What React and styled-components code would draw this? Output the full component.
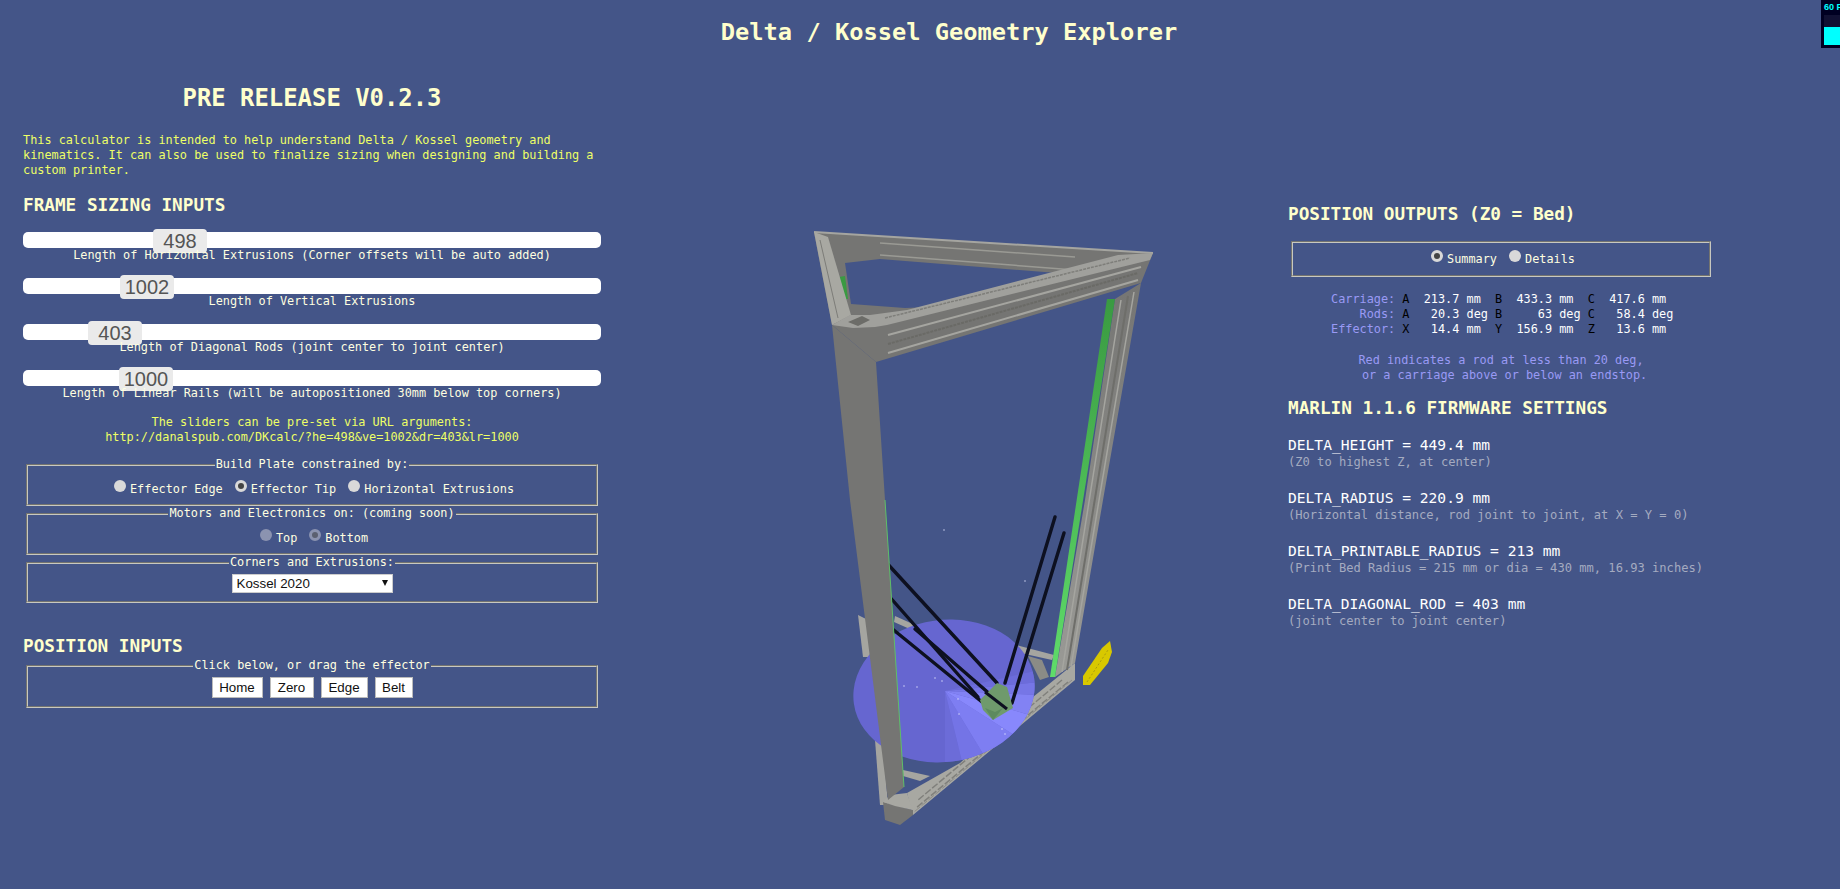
import React from "react";
import styled, { createGlobalStyle } from "styled-components";

const mono = `"DejaVu Sans Mono", "Liberation Mono", monospace`;
const sans = `"Liberation Sans", Arial, sans-serif`;

const GlobalStyle = createGlobalStyle`
  html, body {
    margin: 0;
    padding: 0;
    background: #445588;
    overflow: hidden;
  }
  body {
    font-family: ${mono};
    font-size: 11.85px;
    line-height: 15px;
    color: #ffffe0;
  }
`;

const Page = styled.div`
  position: relative;
  width: 1840px;
  height: 889px;
  overflow: hidden;
`;

const Title = styled.h1`
  margin: 0;
  padding-left: 58px;
  height: 64px;
  line-height: 64px;
  text-align: center;
  font-size: 23.7px;
  font-weight: bold;
  color: #ffffcc;
`;

const Columns = styled.div`
  display: grid;
  grid-template-columns: 625px 645px 570px;
`;

const LeftColumn = styled.section`
  padding-left: 23px;
  width: 578px;
`;

const RightColumn = styled.section`
  padding: 139px 0 0 18px;
`;

const Release = styled.h2`
  margin: 19px 0 0;
  line-height: 30px;
  text-align: center;
  font-size: 23.9px;
  font-weight: bold;
  color: #ffffcc;
`;

const Intro = styled.p`
  margin: 20px 0 0;
  color: #eeff66;
  white-space: pre-line;
`;

const Heading = styled.h3`
  margin: ${(p) => p.$top || 0}px 0 0;
  line-height: 22px;
  font-size: 17.7px;
  font-weight: bold;
  color: #ffffcc;
`;

const SliderList = styled.div`
  display: flex;
  flex-direction: column;
  gap: 15px;
  margin-top: 16px;
`;

const Track = styled.div`
  position: relative;
  height: 16px;
  background: #fff;
  border-radius: 5px;
`;

const Thumb = styled.div`
  position: absolute;
  top: -3px;
  width: 54px;
  height: 24px;
  border-radius: 4px;
  background: #eaeaea;
  color: #555;
  font: 20px/24px ${sans};
  text-align: center;
`;

const SliderLabel = styled.div`
  position: relative;
  text-align: center;
  white-space: pre;
`;

const Hint = styled.div`
  margin-top: 14px;
  color: #eeff66;
  text-align: center;
`;

const Group = styled.fieldset`
  box-sizing: border-box;
  margin: ${(p) => p.$top || 0}px 3px 0;
  padding: 0;
  width: ${(p) => (p.$width ? `${p.$width}px` : "auto")};
  height: ${(p) => p.$height}px;
  min-width: 0;
  border: 2px groove #c8c8c0;
  text-align: center;
`;

const GroupTitle = styled.legend`
  padding: 0 1px;
  line-height: 15px;
  color: #ffffe0;
`;

const RadioRow = styled.div`
  display: flex;
  justify-content: center;
  align-items: flex-start;
  gap: 12px;
  padding: ${(p) => p.$top ?? 10}px 0 0 4px;
`;

const RadioLabel = styled.label`
  display: flex;
  align-items: flex-start;
  gap: 4px;
  color: #ffffe0;
`;

const Radio = styled.input.attrs({ type: "radio" })`
  appearance: none;
  box-sizing: border-box;
  width: 12px;
  height: 12px;
  margin: -2px 0 0;
  border-radius: 50%;
  background: ${(p) => (p.disabled ? "#8b93b0" : "#d9d9d9")};
  &:checked {
    border: 3px solid ${(p) => (p.disabled ? "#8b93b0" : "#d9d9d9")};
    background: ${(p) => (p.disabled ? "#5b6070" : "#444")};
  }
`;

const SelectWrap = styled.div`
  position: relative;
  width: 161px;
  height: 19px;
  margin: 4px auto 0;
`;

const Select = styled.select`
  appearance: none;
  display: block;
  box-sizing: border-box;
  width: 100%;
  height: 100%;
  padding: 0 0 0 4px;
  border: 1px solid #ccc;
  border-radius: 0;
  background: #fff;
  color: #111;
  font: 13.33px ${sans};
`;

const SelectArrow = styled.span`
  position: absolute;
  top: 6px;
  right: 5px;
  border-style: solid;
  border-width: 6px 3px 0;
  border-color: #111 transparent transparent;
  pointer-events: none;
`;

const ButtonRow = styled.div`
  display: flex;
  justify-content: center;
  gap: 7px;
  padding-top: 4px;
`;

const Button = styled.button`
  box-sizing: border-box;
  width: ${(p) => p.$width}px;
  height: 21px;
  padding: 0;
  border: 1px solid #bbb;
  border-radius: 0;
  background: #fff;
  color: #111;
  font: 13.33px ${sans};
`;

const Readout = styled.div`
  margin: 15px 0 0 43px;
  white-space: pre;
  color: #fff;
`;

const Dim = styled.span`
  color: #9a9af5;
`;

const Axis = styled.span`
  color: #000;
`;

const Note = styled.div`
  margin: 16px 0 0 3px;
  width: 420px;
  text-align: center;
  white-space: pre;
  color: #9a9af5;
`;

const Settings = styled.div`
  display: flex;
  flex-direction: column;
  gap: 18px;
  margin-top: 16px;
`;

const SettingName = styled.div`
  font-size: 14.6px;
  line-height: 20px;
  color: #fff;
`;

const SettingHelp = styled.div`
  font-size: 12.1px;
  line-height: 15px;
  color: #a4abc0;
`;

const Stats = styled.div`
  position: absolute;
  top: 0;
  left: 1821px;
  width: 80px;
  height: 48px;
  background: #000022;
`;

const StatsText = styled.div`
  padding: 1px 0 0 3px;
  font: bold 9px/13px ${sans};
  color: #00ffff;
`;

const StatsGraph = styled.div`
  margin: 1px 0 0 3px;
  width: 74px;
  height: 30px;
  background: linear-gradient(#113 0, #113 12px, #00ffff 12px);
`;

const Canvas = styled.svg`
  display: block;
  margin-top: 136px;
`;

const sliders = [
  { value: 498, left: 130, label: "Length of Horizontal Extrusions (Corner offsets will be auto added)" },
  { value: 1002, left: 97, label: "Length of Vertical Extrusions" },
  { value: 403, left: 65, label: "Length of Diagonal Rods (joint center to joint center)" },
  { value: 1000, left: 96, label: "Length of Linear Rails (will be autopositioned 30mm below top corners)" },
];

const settings = [
  { name: "DELTA_HEIGHT = 449.4 mm", help: "(Z0 to highest Z, at center)" },
  { name: "DELTA_RADIUS = 220.9 mm", help: "(Horizontal distance, rod joint to joint, at X = Y = 0)" },
  { name: "DELTA_PRINTABLE_RADIUS = 213 mm", help: "(Print Bed Radius = 215 mm or dia = 430 mm, 16.93 inches)" },
  { name: "DELTA_DIAGONAL_ROD = 403 mm", help: "(joint center to joint center)" },
];

const rods = [
  [884, 560, 997, 683],
  [888, 595, 978, 697],
  [915, 629, 1007, 709],
  [890, 627, 982, 702],
  [1055, 517, 1005, 683],
  [1064, 533, 1012, 703],
];

const bedSpecks = [
  [904, 686], [917, 687], [935, 678], [942, 681], [958, 699],
  [959, 714], [1002, 729], [1005, 734], [1025, 581], [944, 530],
];

// fan of lighter shades on the bed, clockwise from the bottom
const bedFan = [
  ["945,770 964,770", "#6c6cd8"],
  ["964,770 988,762", "#7474e6"],
  ["988,762 1014,735", "#7e7ef2"],
  ["1014,735 1030,715", "#8888fc"],
  ["1030,715 1040,695", "#8282f4"],
  ["1040,695 1040,682", "#7676e6"],
  ["1040,682 1040,670", "#6c6cda"],
];

// the printer scene, drawn in page coordinates
function Printer() {
  return (
    <Canvas width="645" height="640" viewBox="625 200 645 640">
      <defs>
        <linearGradient id="rail" x1="0" y1="0" x2="0" y2="1">
          <stop offset="0" stopColor="#3a9a42" />
          <stop offset="1" stopColor="#5fdc6a" />
        </linearGradient>
        <linearGradient id="rightPost" x1="0" y1="0" x2="0" y2="1">
          <stop offset="0" stopColor="#757573" />
          <stop offset="1" stopColor="#9a9a96" />
        </linearGradient>
        <clipPath id="bedClip">
          <ellipse cx="944" cy="691" rx="91" ry="71" transform="rotate(-8 944 691)" />
        </clipPath>
      </defs>

      {/* rear bottom frame */}
      <polygon points="858,615 868,620 873,657 863,657" fill="#a5a5a0" />
      <polygon points="895,616 915,625 912,630 894,622" fill="#a5a5a0" />
      <polygon points="1016,645 1054,655 1052,660 1016,652" fill="#a5a5a0" />
      <polygon points="1028,656 1042,660 1049,677 1040,680" fill="#8b8b86" />
      <polygon points="875,740 883,745 888,805 880,805" fill="#a5a5a0" />
      <polygon points="903,770 930,776 920,781 903,776" fill="#a5a5a0" />

      {/* front bottom beam, it passes under the bed */}
      <polygon points="1075,663 1075,680 913,815 907,793 960,763 1033,697" fill="#a8a8a2" />
      <line x1="1062" y1="680" x2="918" y2="800" stroke="#80807c" strokeWidth="1.5" strokeDasharray="7 2" />
      <line x1="1068" y1="682" x2="916" y2="808" stroke="#80807c" strokeWidth="1.5" strokeDasharray="7 2" />
      <line x1="1072" y1="680" x2="914" y2="812" stroke="#8c8c88" strokeWidth="1" strokeDasharray="7 2" />

      {/* bed */}
      <ellipse cx="944" cy="691" rx="91" ry="71" transform="rotate(-8 944 691)" fill="#6666d0" />
      <g clipPath="url(#bedClip)">
        {bedFan.map(([edge, fill]) => (
          <polygon key={edge} points={`945,691 ${edge}`} fill={fill} />
        ))}
      </g>
      {bedSpecks.map((s, i) => (
        <circle key={i} cx={s[0]} cy={s[1]} r="0.7" fill="#dfe4ff" />
      ))}

      {/* bottom corner of the frame */}
      <polygon points="883,802 913,810 913,815 900,825 885,820" fill="#757573" />
      <polygon points="883,802 895,806 913,810 907,793 890,795" fill="#a8a8a2" />

      {/* top frame with its opening */}
      <path
        d="M814,232 L1153,253 L1141,283 L876,362 L832,325 Z M845,263 L880,259 L1057,273 L930,307 L905,308 L851,304 Z"
        fill="#757573"
        fillRule="evenodd"
      />
      <polygon points="839,277 845,276 848,299 843,299" fill="#3a9a42" />
      <line x1="880" y1="243" x2="1075" y2="257" stroke="#9a9a94" strokeWidth="1.5" />
      <line x1="880" y1="255" x2="1075" y2="270" stroke="#9a9a94" strokeWidth="1.5" />
      <line x1="814" y1="232" x2="1153" y2="253" stroke="#a5a5a0" strokeWidth="2" />
      <polygon points="814,232 828,237 851,315 832,325" fill="#a8a8a2" />
      <line x1="820" y1="240" x2="838" y2="318" stroke="#7c7c78" strokeWidth="1" />
      <polygon points="832,325 850,315 870,315 907,310 1118,255 1153,253 1150,260 887,325 875,327 853,328" fill="#a0a09c" />
      <line x1="885" y1="318" x2="1130" y2="258" stroke="#7e7e7a" strokeWidth="1.5" strokeDasharray="3 1" />
      <polygon points="848,322 862,316 870,320 858,326" fill="#6c6c68" />
      <line x1="888" y1="335" x2="1141" y2="267" stroke="#a5a5a0" strokeWidth="2" />
      <line x1="888" y1="353" x2="1138" y2="280" stroke="#a5a5a0" strokeWidth="2" />
      <line x1="888" y1="344" x2="1138" y2="273" stroke="#6a6a66" strokeWidth="2" strokeDasharray="3 1" />

      {/* right post with its rail */}
      <polygon points="1115,299 1141,283 1103,500 1075,663 1055,677 1085,500" fill="url(#rightPost)" />
      <line x1="1121" y1="300" x2="1062" y2="672" stroke="#a5a5a0" strokeWidth="1.5" />
      <line x1="1128" y1="296" x2="1067" y2="670" stroke="#6e6e6a" strokeWidth="2" />
      <line x1="1134" y1="292" x2="1071" y2="667" stroke="#a5a5a0" strokeWidth="1.5" />
      <polygon points="1107,299 1115,299 1055,677 1050,677" fill="url(#rail)" />

      {/* rods and effector */}
      <g stroke="#0d1020" strokeWidth="3.4" strokeLinecap="round">
        {rods.map((r, i) => (
          <line key={i} x1={r[0]} y1={r[1]} x2={r[2]} y2={r[3]} />
        ))}
      </g>
      <polygon points="980,700 997,683 1007,687 1013,708 993,720 983,710" fill="#6f9a6c" />
      <polygon points="985,708 995,712 1003,708 993,720" fill="#5d8a60" />
      <line x1="1007" y1="709" x2="985" y2="692" stroke="#0d1020" strokeWidth="3" />

      {/* left post */}
      <polygon points="832,325 876,362 885,500 904,787 888,800 850,500" fill="#757573" />
      <line x1="885" y1="500" x2="904" y2="787" stroke="#5fbf68" strokeWidth="1" />

      {/* yellow part beside the frame */}
      <polygon points="1083,685 1083,676 1102,648 1110,641 1112,652 1108,663 1090,685" fill="#d8c800" />
      <line x1="1087" y1="682" x2="1108" y2="650" stroke="#a89c10" strokeWidth="1" strokeDasharray="2 2" />
    </Canvas>
  );
}

export default function App() {
  return (
    <Page>
      <GlobalStyle />
      <Title>Delta / Kossel Geometry Explorer</Title>
      <Columns>
        <LeftColumn>
          <Release>PRE RELEASE V0.2.3</Release>
          <Intro>
            {"This calculator is intended to help understand Delta / Kossel geometry and\nkinematics. It can also be used to finalize sizing when designing and building a\ncustom printer."}
          </Intro>
          <Heading $top={16}>FRAME SIZING INPUTS</Heading>
          <SliderList>
            {sliders.map((s) => (
              <div key={s.label}>
                <Track>
                  <Thumb style={{ left: s.left }}>{s.value}</Thumb>
                </Track>
                <SliderLabel>{s.label}</SliderLabel>
              </div>
            ))}
          </SliderList>
          <Hint>
            The sliders can be pre-set via URL arguments:
            <br />
            http://danalspub.com/DKcalc/?he=498&amp;ve=1002&amp;dr=403&amp;lr=1000
          </Hint>
          <Group $top={12} $height={49}>
            <GroupTitle>Build Plate constrained by:</GroupTitle>
            <RadioRow>
              <RadioLabel><Radio name="plate" />Effector Edge</RadioLabel>
              <RadioLabel><Radio name="plate" defaultChecked />Effector Tip</RadioLabel>
              <RadioLabel><Radio name="plate" />Horizontal Extrusions</RadioLabel>
            </RadioRow>
          </Group>
          <Group $height={49}>
            <GroupTitle>Motors and Electronics on: (coming soon)</GroupTitle>
            <RadioRow>
              <RadioLabel><Radio name="motors" disabled />Top</RadioLabel>
              <RadioLabel><Radio name="motors" disabled defaultChecked />Bottom</RadioLabel>
            </RadioRow>
          </Group>
          <Group $height={48}>
            <GroupTitle>Corners and Extrusions:</GroupTitle>
            <SelectWrap>
              <Select defaultValue="k2020">
                <option value="k2020">Kossel 2020</option>
              </Select>
              <SelectArrow />
            </SelectWrap>
          </Group>
          <Heading $top={32}>POSITION INPUTS</Heading>
          <Group $top={1} $height={50}>
            <GroupTitle>Click below, or drag the effector</GroupTitle>
            <ButtonRow>
              <Button $width={51}>Home</Button>
              <Button $width={44}>Zero</Button>
              <Button $width={47}>Edge</Button>
              <Button $width={38}>Belt</Button>
            </ButtonRow>
          </Group>
        </LeftColumn>

        <Printer />

        <RightColumn>
          <Heading>POSITION OUTPUTS (Z0 = Bed)</Heading>
          <Group $top={16} $height={36} $width={420}>
            <RadioRow $top={9}>
              <RadioLabel><Radio name="outputs" defaultChecked />Summary</RadioLabel>
              <RadioLabel><Radio name="outputs" />Details</RadioLabel>
            </RadioRow>
          </Group>
          <Readout>
            <Dim>Carriage:</Dim> <Axis>A</Axis>{"  213.7 mm  "}<Axis>B</Axis>{"  433.3 mm  "}<Axis>C</Axis>{"  417.6 mm\n"}
            <Dim>{"    Rods:"}</Dim> <Axis>A</Axis>{"   20.3 deg "}<Axis>B</Axis>{"     63 deg "}<Axis>C</Axis>{"   58.4 deg\n"}
            <Dim>Effector:</Dim> <Axis>X</Axis>{"   14.4 mm  "}<Axis>Y</Axis>{"  156.9 mm  "}<Axis>Z</Axis>{"   13.6 mm"}
          </Readout>
          <Note>{"Red indicates a rod at less than 20 deg,\n or a carriage above or below an endstop."}</Note>
          <Heading $top={14}>MARLIN 1.1.6 FIRMWARE SETTINGS</Heading>
          <Settings>
            {settings.map((s) => (
              <div key={s.name}>
                <SettingName>{s.name}</SettingName>
                <SettingHelp>{s.help}</SettingHelp>
              </div>
            ))}
          </Settings>
        </RightColumn>
      </Columns>
      <Stats>
        <StatsText>60 FPS</StatsText>
        <StatsGraph />
      </Stats>
    </Page>
  );
}
